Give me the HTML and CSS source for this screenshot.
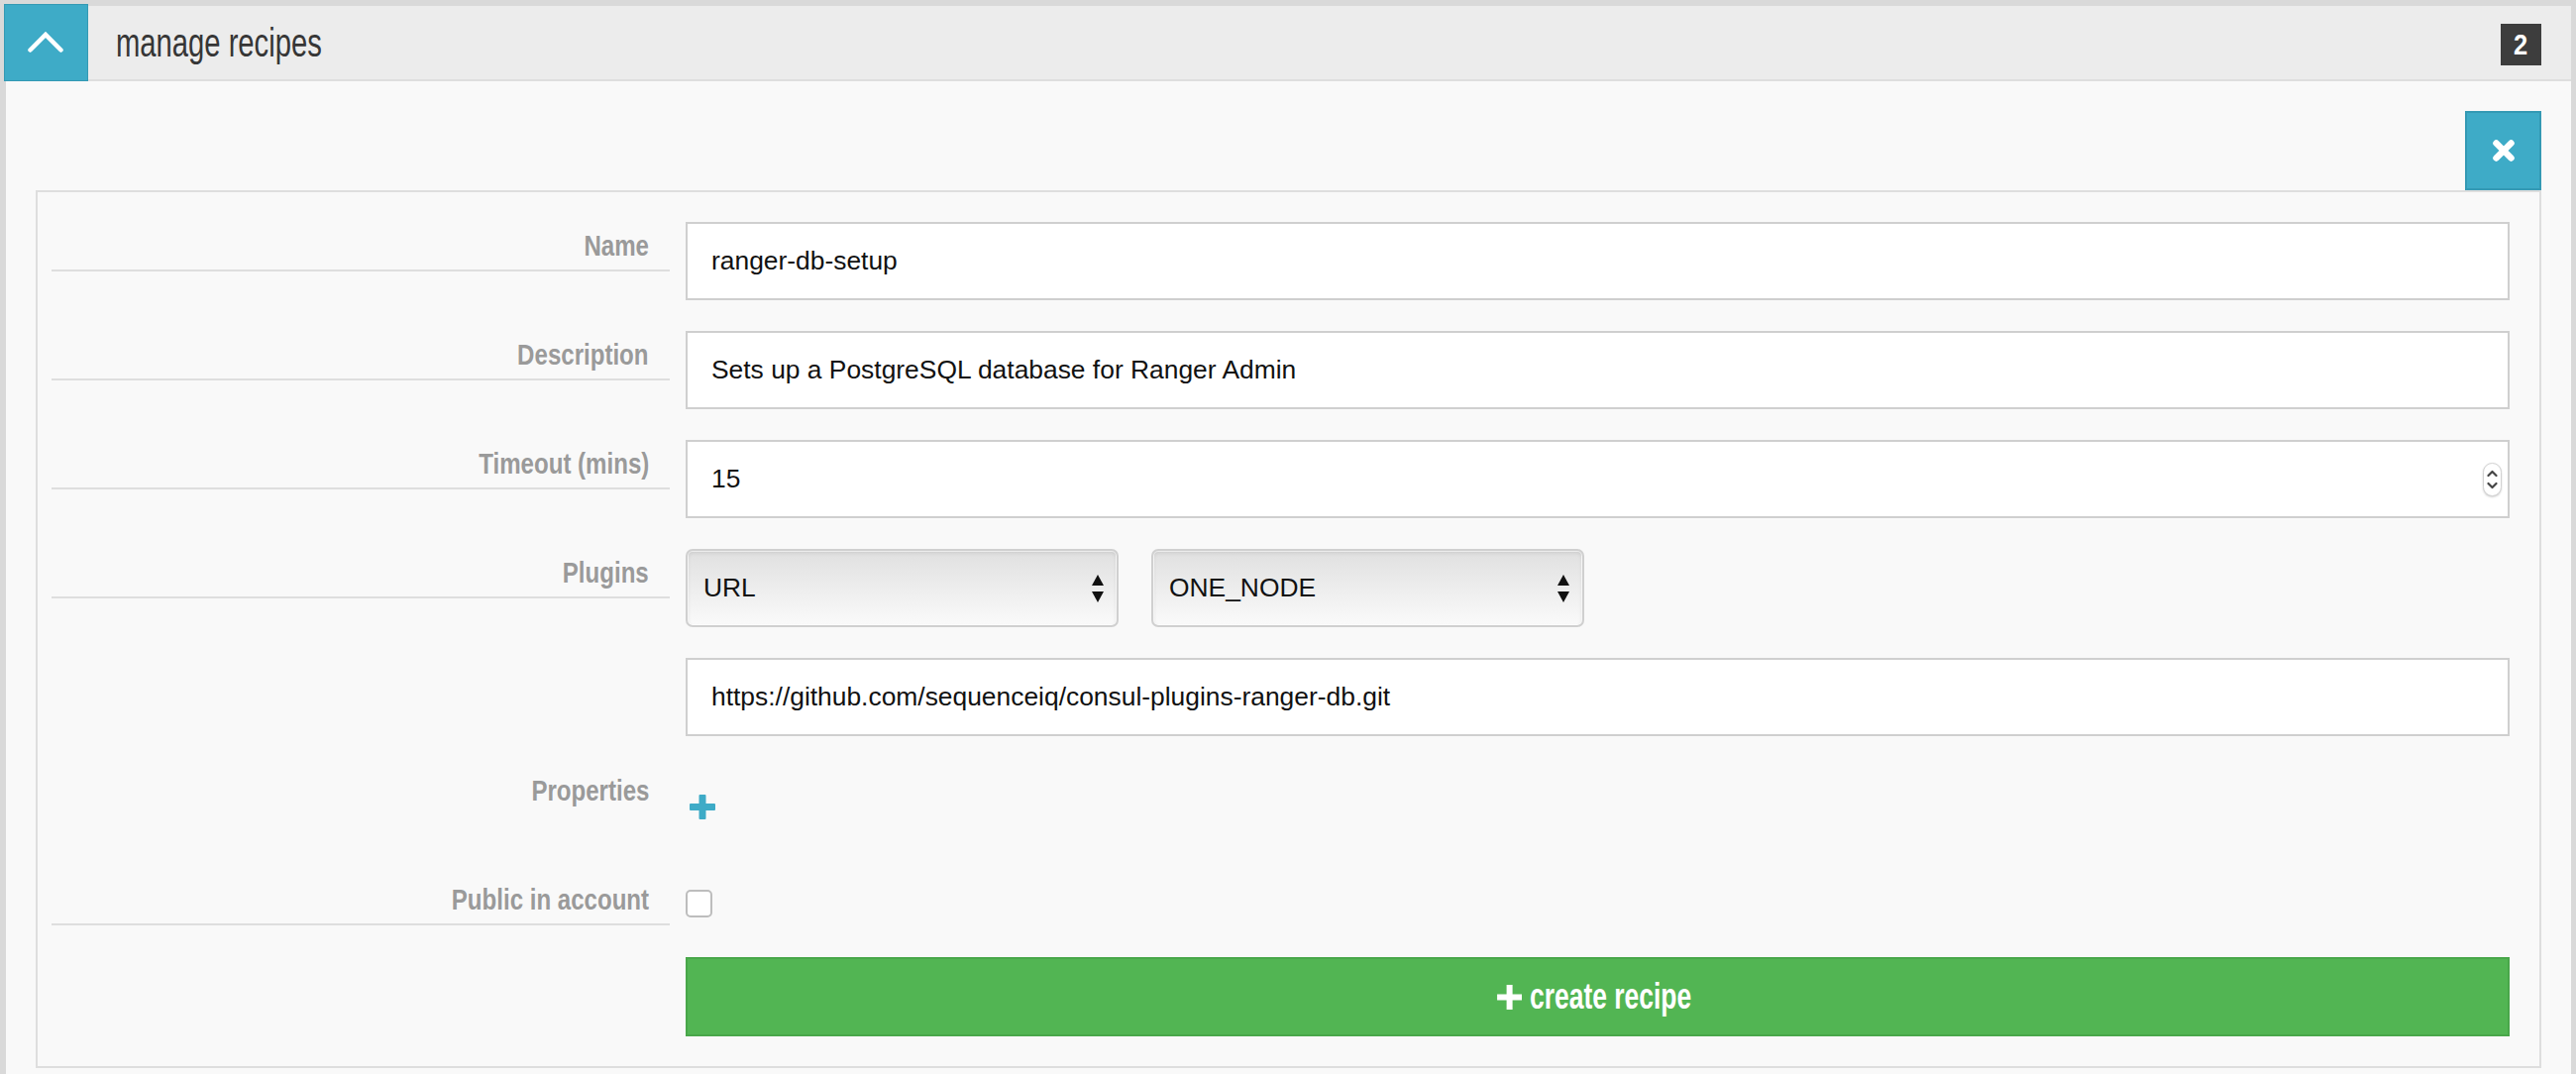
FILE: index.html
```html
<!DOCTYPE html>
<html lang="en">
<head>
<meta charset="utf-8">
<title>manage recipes</title>
<link rel="stylesheet" href="styles.css">
</head>
<body>
<div class="panel">
  <div class="panel-head">
    <button class="toggle" type="button" aria-label="collapse">
      <svg width="36" height="22" viewBox="0 0 36 22"><polyline points="2.5,19.5 18,4 33.5,19.5" fill="none" stroke="#fff" stroke-width="4.5" stroke-linecap="round" stroke-linejoin="miter"/></svg>
    </button>
    <h3 class="title"><span class="cond-l">manage recipes</span></h3>
    <span class="badge"><span class="badge-num">2</span></span>
  </div>
  <div class="panel-body">
    <div class="toolbar">
      <button class="close" type="button" aria-label="close">
        <svg width="22" height="22" viewBox="0 0 22 22"><path d="M3.5 3.5 L18.5 18.5 M18.5 3.5 L3.5 18.5" stroke="#fff" stroke-width="6.5" stroke-linecap="round"/></svg>
      </button>
    </div>
    <form class="recipe-form">
      <div class="row">
        <label class="lbl"><span class="cond-r">Name</span></label>
        <div class="ctl"><input class="field" type="text" value="ranger-db-setup"></div>
      </div>
      <div class="row">
        <label class="lbl"><span class="cond-r">Description</span></label>
        <div class="ctl"><input class="field" type="text" value="Sets up a PostgreSQL database for Ranger Admin"></div>
      </div>
      <div class="row">
        <label class="lbl"><span class="cond-r">Timeout (mins)</span></label>
        <div class="ctl">
          <div class="field field-num">
            <input class="bare" type="text" value="15">
            <span class="spin"><svg width="11" height="24" viewBox="0 0 11 24"><path d="M1.5 8 L5.5 4 L9.5 8 M1.5 16 L5.5 20 L9.5 16" fill="none" stroke="#444" stroke-width="2.2" stroke-linecap="round" stroke-linejoin="round"/></svg></span>
          </div>
        </div>
      </div>
      <div class="row">
        <label class="lbl"><span class="cond-r">Plugins</span></label>
        <div class="ctl stack">
          <div class="selects">
            <div class="select"><span>URL</span><svg width="12" height="28" viewBox="0 0 12 28"><polygon points="6,0 12,11 0,11" fill="#111"/><polygon points="0,17 12,17 6,28" fill="#111"/></svg></div>
            <div class="select"><span>ONE_NODE</span><svg width="12" height="28" viewBox="0 0 12 28"><polygon points="6,0 12,11 0,11" fill="#111"/><polygon points="0,17 12,17 6,28" fill="#111"/></svg></div>
          </div>
          <input class="field" type="text" value="https://github.com/sequenceiq/consul-plugins-ranger-db.git">
        </div>
      </div>
      <div class="row row-props">
        <label class="lbl lbl-plain"><span class="cond-r">Properties</span></label>
        <div class="ctl ctl-props">
          <svg class="plus" width="26" height="25" viewBox="0 0 26 25"><rect x="0" y="9" width="26" height="7" rx="1" fill="#3eabc7"/><rect x="9.5" y="0" width="7" height="25" rx="1" fill="#3eabc7"/></svg>
        </div>
      </div>
      <div class="row row-public">
        <label class="lbl"><span class="cond-r">Public in account</span></label>
        <div class="ctl"><span class="check"></span></div>
      </div>
      <div class="row">
        <div class="spacer"></div>
        <div class="ctl">
          <button class="create" type="button">
            <span class="create-label">
              <svg width="35" height="25" viewBox="0 0 25 25" preserveAspectRatio="none"><rect x="0" y="9.5" width="25" height="6" fill="#fff"/><rect x="9.5" y="0" width="6" height="25" fill="#fff"/></svg>
              <span>create recipe</span>
            </span>
          </button>
        </div>
      </div>
    </form>
  </div>
</div>
</body>
</html>
```
FILE: styles.css
```css
html, body {
  margin: 0;
}
body {
  background: #d9d9d9;
  font-family: "Liberation Sans", Arial, sans-serif;
  padding: 6px 5px 0 6px;
  overflow: hidden;
}
.panel {
  background: #f9f9f9;
  min-height: 1078px;
}
.panel-head {
  display: flex;
  align-items: center;
  height: 74px;
  background: #ececec;
  border-bottom: 2px solid #dedede;
  padding-right: 30px;
}
.toggle {
  width: 85px;
  height: 78px;
  margin: -2px 0 -2px -2px;
  box-sizing: border-box;
  background: #3eabc7;
  border: 1px solid #3499b4;
  padding: 0;
  display: flex;
  align-items: center;
  justify-content: center;
  flex: none;
}
.toggle svg {
  margin-top: -2px;
  margin-left: -2px;
}
.title {
  flex: 1;
  margin: 0 0 0 28px;
  font-weight: normal;
  font-size: 40px;
  line-height: 70px;
  color: #363636;
}
.cond-l {
  display: inline-block;
  transform: scaleX(0.73);
  transform-origin: left center;
  white-space: nowrap;
}
.badge {
  width: 41px;
  height: 42px;
  margin-top: 4px;
  background: #3d3d3d;
  color: #fff;
  font-weight: bold;
  font-size: 29px;
  display: flex;
  align-items: center;
  justify-content: center;
}
.badge-num {
  display: inline-block;
  transform: scaleX(0.88);
}
.panel-body {
  padding: 30px 30px 0 30px;
}
.toolbar {
  display: flex;
  justify-content: flex-end;
}
.close {
  width: 77px;
  height: 80px;
  box-sizing: border-box;
  background: #3eabc7;
  border: 2px solid #3499b4;
  padding: 0;
  display: flex;
  align-items: center;
  justify-content: center;
  position: relative;
  z-index: 1;
}
.recipe-form {
  border: 2px solid #dedede;
  padding: 30px 30px 30px 14px;
  display: flex;
  flex-direction: column;
  gap: 31px;
}
.row {
  display: grid;
  grid-template-columns: 624px 1fr;
  column-gap: 16px;
  align-items: start;
}
.lbl {
  display: block;
  box-sizing: border-box;
  height: 50px;
  border-bottom: 2px solid #dedede;
  padding: 7px 21px 0 0;
  text-align: right;
  font-weight: bold;
  font-size: 29px;
  line-height: 34px;
  color: #9a9a9a;
  white-space: nowrap;
}
.lbl-plain {
  border-bottom-color: transparent;
}
.cond-r {
  display: inline-block;
  transform: scaleX(0.83);
  transform-origin: right center;
}
.field {
  display: block;
  width: 100%;
  height: 79px;
  box-sizing: border-box;
  border: 2px solid #cfcfcf;
  background: #fff;
  padding: 0 24px;
  margin: 0;
  font-family: "Liberation Sans", Arial, sans-serif;
  font-size: 26.4px;
  color: #111;
  outline: none;
  border-radius: 0;
}
.field-num {
  display: flex;
  align-items: center;
  padding: 0 6px 0 24px;
}
.bare {
  flex: 1;
  min-width: 0;
  height: 100%;
  border: 0;
  padding: 0;
  margin: 0;
  background: transparent;
  font: inherit;
  color: inherit;
  outline: none;
}
.spin {
  width: 19px;
  height: 34px;
  box-sizing: border-box;
  border: 1px solid #d2d2d2;
  border-radius: 10px;
  background: #fff;
  box-shadow: 0 1px 2px rgba(0, 0, 0, 0.18);
  display: flex;
  align-items: center;
  justify-content: center;
}
.stack {
  display: flex;
  flex-direction: column;
  gap: 31px;
}
.selects {
  display: flex;
  gap: 33px;
}
.select {
  width: 437px;
  height: 79px;
  box-sizing: border-box;
  border: 2px solid #d0d0d0;
  border-radius: 7px;
  background: linear-gradient(#e0e0e0, #fafafa);
  box-shadow: inset 0 2px 4px rgba(0, 0, 0, 0.1), inset 0 0 0 1px #fff;
  display: flex;
  align-items: center;
  justify-content: space-between;
  padding: 0 13px 0 16px;
  font-size: 26.4px;
  color: #111;
}
.ctl-props {
  height: 79px;
}
.plus {
  display: block;
  margin: 28px 0 0 4px;
}
.check {
  display: block;
  width: 27px;
  height: 28px;
  margin-top: 14px;
  box-sizing: border-box;
  border: 2px solid #bdbdbd;
  border-radius: 5px;
  background: #fff;
}
.row-public {
  min-height: 51px;
}
.create {
  display: flex;
  align-items: center;
  justify-content: center;
  width: 100%;
  height: 80px;
  box-sizing: border-box;
  background: #52b553;
  border: 2px solid #49a74a;
  color: #fff;
  font-family: "Liberation Sans", Arial, sans-serif;
  font-weight: bold;
  font-size: 37px;
  padding: 0;
}
.create-label {
  display: inline-flex;
  align-items: center;
  gap: 11px;
  transform: scaleX(0.715);
  transform-origin: center center;
  margin-left: -6px;
  white-space: nowrap;
}
```
